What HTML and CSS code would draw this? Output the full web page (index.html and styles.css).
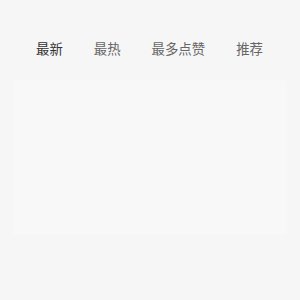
FILE: index.html
```html
<!DOCTYPE html>
<html lang="zh-CN">
<head>
    <meta charset="UTF-8">
    <title>列表</title>
    <link rel="stylesheet" href="styles.css">
</head>
<body>
    <div class="tabs">
        <span class="tab active">最新</span>
        <span class="tab">最热</span>
        <span class="tab">最多点赞</span>
        <span class="tab">推荐</span>
    </div>
    <div class="list">
        <div class="card"></div>
    </div>
</body>
</html>
```

FILE: styles.css
```css
body {
    margin: 0;
    width: 300px;
    height: 300px;
    background: #f6f6f6;
    font-family: "Noto Sans CJK SC", "Liberation Sans", sans-serif;
    overflow: hidden;
}

.tabs {
    display: flex;
    gap: 31px;
    padding: 38px 0 0 36px;
    height: 28px;
}

.tab {
    font-size: 13.4px;
    line-height: 20px;
    color: #666;
}

.tab.active {
    color: #333;
}

.list {
    padding: 14px 13px 0;
}

.card {
    height: 155px;
    background: #f8f8f8;
    border-radius: 3px;
}
```
